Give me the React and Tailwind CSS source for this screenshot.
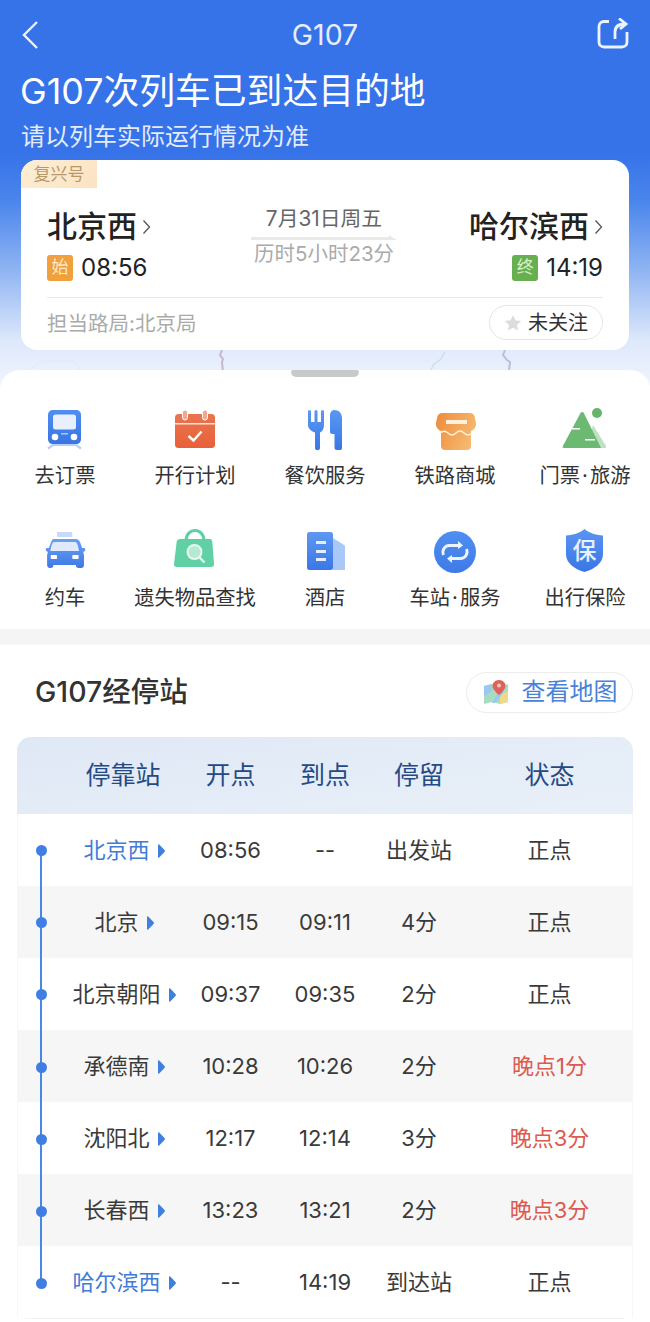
import React from "react";

const Grad = ({ id, from, to, x2 = 0, y2 = 1 }) => (
  <defs>
    <linearGradient id={id} x1="0" y1="0" x2={x2} y2={y2}>
      <stop offset="0" stopColor={from} />
      <stop offset="1" stopColor={to} />
    </linearGradient>
  </defs>
);

const Svg = ({ children }) => (
  <svg width="48" height="48" viewBox="0 0 48 48" fill="none">
    {children}
  </svg>
);

const TrainIcon = () => (
  <Svg>
    <Grad id="train" from="#4f8ff0" to="#3a74e4" />
    <path d="M12 4h23c3 0 5 2 5 5v24c0 3-2 5-5 5H12c-3 0-5-2-5-5V9c0-3 2-5 5-5z" fill="url(#train)" />
    <rect x="12" y="8.5" width="23" height="15" rx="2.5" fill="#e9f0fd" />
    <circle cx="14" cy="31" r="3.3" fill="#fff" />
    <circle cx="33" cy="31" r="3.3" fill="#fff" />
    <rect x="20" y="27" width="7" height="1.5" fill="#a9c6f7" />
    <path d="M7 42.5l5-3.500h23l5 3.500" stroke="#b4cff8" strokeWidth="2.2" />
  </Svg>
);

const CalendarIcon = () => (
  <Svg>
    <Grad id="cal" from="#e8764f" to="#e8603a" />
    <rect x="4" y="8" width="40" height="34" rx="3.5" fill="url(#cal)" />
    <rect x="4" y="17" width="40" height="1.5" fill="#fbe3da" />
    <rect x="11.5" y="4" width="5" height="10" rx="2.5" fill="#f3a68d" stroke="#fff" strokeWidth="1" />
    <rect x="31.5" y="4" width="5" height="10" rx="2.5" fill="#f3a68d" stroke="#fff" strokeWidth="1" />
    <path d="M17.5 30l5 4.500 8-9" stroke="#fff" strokeWidth="2.4" />
  </Svg>
);

const DiningIcon = () => (
  <Svg>
    <Grad id="din" from="#5a98f2" to="#3a76e6" />
    <path
      d="M7 5c0-1 3-1 3 0v11h3.500V5c0-1 3-1 3 0v11H20V5c0-1 3-1 3 0v14c0 4-2 6.500-4 7.500V42c0 3-5 3-5 0V26.500C11 25.500 7 23 7 19z"
      fill="url(#din)"
    />
    <path d="M33.500 4c5 0 7.500 4 7.500 8v30c0 1.500-1 2-2 2h-3c-1.500 0-2.500-1-2.500-2V28h-2c-1.500 0-2.500-1-2.500-2V9c0-3 2-5 4.500-5z" fill="url(#din)" />
  </Svg>
);

const StoreIcon = () => (
  <Svg>
    <Grad id="store" from="#ee8a3c" to="#f5b96e" x2={1} y2={0.4} />
    <path d="M11 7h28c2 0 3.500 1 4.500 3L45 17c.5 3-1.500 7-5 8v15c0 2.500-1.500 4-4 4H14c-2.500 0-4-1.500-4-4V25c-3.500-1-5.500-5-5-8l1.500-7C7.500 8 9 7 11 7z" fill="url(#store)" />
    <rect x="15" y="14" width="21" height="4" fill="#fdf0dd" />
    <path d="M9 27c3-2.500 5.500-2.500 8 0s5.500 2.500 8 0 5.500-2.500 8 0 5.500 2.500 8 0" stroke="#fdf0dd" strokeWidth="1.4" />
  </Svg>
);

const MountainIcon = () => (
  <Svg>
    <circle cx="36" cy="7" r="5" fill="#66b56c" />
    <path d="M32 19l13 21c.5 1 0 2-1 2H26z" fill="#bfe0c2" />
    <path d="M19.500 7c1-1.300 2.500-1.300 3.300 0L40 42H3c-1.300 0-1.800-1-1-2.200z" fill="#6cb972" />
    <rect x="11" y="22" width="8" height="1.5" fill="#fff" />
    <rect x="24" y="33" width="10" height="1.5" fill="#fff" />
  </Svg>
);

const CarIcon = () => (
  <Svg>
    <Grad id="car" from="#6ba0f3" to="#3e7ae6" />
    <g transform="translate(2.5 0) scale(0.9 1)">
      <rect x="15" y="4" width="17" height="5" rx="1" fill="#c7daf9" />
      <path d="M11 11h25c3 0 4 2 5 4l2 5h2c1.500 0 2 2 1 3l-2 1c.5 1 1 2 1 4v9c0 1.500-.8 3-3 3h-3c-2 0-3-1-3-3H11c0 2-1 3-3 3H7c-2 0-3-1.500-3-3V28c0-2 .5-3 1-4l-2-1c-1-1-.5-3 1-3h2l2-5c1-2 2-4 3-4z" fill="url(#car)" />
      <path d="M12 14h23c1.500 0 2 1 3 3l1.500 6h-32L9 17c1-2 1.500-3 3-3z" fill="#dfeafc" />
      <rect x="8" y="27" width="7" height="4" rx="0.8" fill="#fff" />
      <rect x="32" y="27" width="7" height="4" rx="0.8" fill="#fff" />
    </g>
  </Svg>
);

const BagIcon = () => (
  <Svg>
    <path d="M15 13c0-14 18-14 18 0" stroke="#5fd0a6" strokeWidth="3" />
    <path d="M9 11h30c1.500 0 2 1 2.300 2.500L43 36c.2 2-1 3-3 3H6c-2 0-3.200-1-3-3l2.700-22.500C6 12 7.500 11 9 11z" fill="#62d0a5" />
    <circle cx="23.5" cy="24" r="7" fill="#b6e9d4" stroke="#e7f8f1" strokeWidth="2" />
    <path d="M28.500 29.500l5 5" stroke="#e7f8f1" strokeWidth="2.4" />
  </Svg>
);

const HotelIcon = () => (
  <Svg>
    <Grad id="hotel" from="#5e98f1" to="#3b77e6" />
    <path d="M32 10l11 7c.5.3 1 .8 1 1.500V42H32z" fill="#a9c7f7" />
    <rect x="6" y="4" width="26" height="38" rx="2.5" fill="url(#hotel)" />
    <rect x="15" y="13" width="10" height="3" fill="#e4eefd" />
    <rect x="15" y="22" width="10" height="3" fill="#e4eefd" />
    <rect x="15" y="30" width="10" height="3" fill="#e4eefd" />
  </Svg>
);

const CycleIcon = () => (
  <Svg>
    <Grad id="cyc" from="#4f8ff0" to="#3f7ae6" />
    <circle cx="24" cy="24" r="21" fill="url(#cyc)" />
    <path d="M12.500 27c-2-5 1.500-9.500 6-9.500h11" stroke="#eef4fe" strokeWidth="2.8" />
    <path d="M27 13l5 4.500-5 3.500z" fill="#eef4fe" />
    <path d="M35.500 21c2 5-1.500 9.500-6 9.500h-11" stroke="#eef4fe" strokeWidth="2.8" />
    <path d="M21 35l-5-4.500 5-3.500z" fill="#eef4fe" />
  </Svg>
);

const ShieldIcon = () => (
  <Svg>
    <Grad id="shield" from="#5a95f1" to="#3a76e6" />
    <path d="M23.500 1c4 3.500 11 6 18.500 6.500V26c0 9-8 15-18.500 18C13 41 5 35 5 26V7.500C12.500 7 19.500 4.500 23.500 1z" fill="url(#shield)" />
    <text x="23.5" y="31" textAnchor="middle" fontSize="24" fontWeight="500" fill="#e9f1fe">
      保
    </text>
  </Svg>
);

const MapIcon = () => (
  <svg width="28" height="26" viewBox="0 0 28 26" fill="none">
    <path d="M2 7l8-2 8 2 8-2v18l-8 2-8-2-8 2z" fill="#a8dcc0" />
    <path d="M2 7l8-2v7l-8 5z" fill="#9cc7ee" />
    <path d="M18 16l8-4v11l-8 2z" fill="#f1d98a" />
    <path d="M10 24l8-14 4 3-9 11z" fill="#9cc7ee" />
    <path d="M17 1c-4 0-6.500 3-6.500 6C10.500 11 17 16 17 16s6.500-5 6.500-9c0-3-2.500-6-6.500-6z" fill="#e0605a" />
    <circle cx="17" cy="6.500" r="2" fill="#f7c5c1" />
  </svg>
);

const menus = [
  { icon: TrainIcon, label: "去订票" },
  { icon: CalendarIcon, label: "开行计划" },
  { icon: DiningIcon, label: "餐饮服务" },
  { icon: StoreIcon, label: "铁路商城" },
  { icon: MountainIcon, label: "门票", extra: "旅游" },
  { icon: CarIcon, label: "约车" },
  { icon: BagIcon, label: "遗失物品查找" },
  { icon: HotelIcon, label: "酒店" },
  { icon: CycleIcon, label: "车站", extra: "服务" },
  { icon: ShieldIcon, label: "出行保险" },
];

const stops = [
  { name: "北京西", dep: "08:56", arr: "--", stay: "出发站", status: "正点", active: true },
  { name: "北京", dep: "09:15", arr: "09:11", stay: "4分", status: "正点" },
  { name: "北京朝阳", dep: "09:37", arr: "09:35", stay: "2分", status: "正点" },
  { name: "承德南", dep: "10:28", arr: "10:26", stay: "2分", status: "晚点1分", late: true },
  { name: "沈阳北", dep: "12:17", arr: "12:14", stay: "3分", status: "晚点3分", late: true },
  { name: "长春西", dep: "13:23", arr: "13:21", stay: "2分", status: "晚点3分", late: true },
  { name: "哈尔滨西", dep: "--", arr: "14:19", stay: "到达站", status: "正点", active: true },
];

const Chevron = () => (
  <svg width="9" height="16" viewBox="0 0 9 16" fill="none" className="ml-[5px] mt-[1px]">
    <path d="M1.500 1.500L7.500 8l-6 6.500" stroke="#555" strokeWidth="1.3" />
  </svg>
);

const App = () => {
  return (
    <div className="relative h-[1322px] w-[650px] overflow-hidden bg-white font-['Inter','Noto_Sans_CJK_SC',sans-serif]">
      {/* Blue header */}
      <div className="relative h-[390px] bg-[linear-gradient(180deg,#3672e8_0px,#3672e8_150px,#4a85ec_200px,#8fb4f2_270px,#dde8fb_340px,#f2f6fe_390px)] px-[21px]">
        <div className="flex h-[70px] items-center justify-between">
          <div className="w-[32px]">
            <svg width="20" height="30" viewBox="0 0 20 30" fill="none">
              <path d="M16 2L3 15l13 13" stroke="#eef4fe" strokeWidth="2.4" />
            </svg>
          </div>
          <span className="text-[28.5px] leading-none text-[#e6eefc]">G107</span>
          <svg width="32" height="32" viewBox="0 0 32 32" fill="none" className="mt-[-2px]">
            <path d="M12 3.500H7c-3 0-5 2-5 5V24c0 3 2 5 5 5h18c3 0 5-2 5-5V14" stroke="#eef4fe" strokeWidth="2.8" />
            <path d="M18 21v-7c0-5 3-8 10-8" stroke="#eef4fe" strokeWidth="2.8" />
            <path d="M22 .5L29 6l-6 5" stroke="#eef4fe" strokeWidth="2.8" />
          </svg>
        </div>
        <h1 className="ml-[-1px] text-[35.8px] leading-[42px] text-white">G107次列车已到达目的地</h1>
        <p className="mt-[10px] text-[24px] leading-[30px] text-[#e4ecfc]">请以列车实际运行情况为准</p>

        <div className="relative z-10 mt-[8px] h-[190px] w-[608px] overflow-hidden rounded-[16px] bg-white px-[26px]">
          <div className="absolute left-0 top-0 flex h-[28px] w-[76px] items-center justify-center bg-[linear-gradient(135deg,#fdeed6,#fbe3c2)] pt-[1px] text-[17px] text-[#b8986a]">
            复兴号
          </div>
          <div className="flex h-[137px] justify-between pt-[47px]">
            <div>
              <div className="flex h-[38px] items-center">
                <span className="text-[30px] font-medium leading-none text-[#222]">北京西</span>
                <Chevron />
              </div>
              <div className="mt-[10px] flex items-center gap-[8px]">
                <span className="flex h-[26px] w-[26px] items-center justify-center rounded-[3px] bg-[#f0a03c] text-[17px] text-[#fde9cc]">始</span>
                <span className="text-[24px] leading-none text-[#222]">08:56</span>
              </div>
            </div>
            <div className="ml-[28px] flex w-[146px] flex-col items-center">
              <span className="mt-[-2px] text-[20.8px] leading-[28px] text-[#666]">7月31日周五</span>
              <svg width="146" height="8" viewBox="0 0 146 8" fill="none" className="mt-[1px]">
                <path d="M0 3h138V1l8 5H0z" fill="#e9e9e9" />
              </svg>
              <span className="mt-[-2px] text-[20.5px] leading-[28px] text-[#aaa]">历时5小时23分</span>
            </div>
            <div className="flex flex-col items-end">
              <div className="flex h-[38px] items-center">
                <span className="text-[30px] font-medium leading-none text-[#222]">哈尔滨西</span>
                <Chevron />
              </div>
              <div className="mt-[10px] flex items-center gap-[8px]">
                <span className="flex h-[26px] w-[26px] items-center justify-center rounded-[3px] bg-[#68b04f] text-[17px] text-[#d8f0cc]">终</span>
                <span className="text-[24px] leading-none text-[#222]">14:19</span>
              </div>
            </div>
          </div>
          <div className="flex h-[53px] items-center justify-between border-t border-[#e8e8e8] pb-[3px]">
            <span className="pt-[3px] text-[20.5px] text-[#aaa]">担当路局:北京局</span>
            <span className="flex h-[35px] w-[114px] items-center justify-center gap-[6px] rounded-full border border-[#e5e5e5] pt-[1px] text-[20px] text-[#333]">
              <svg width="18" height="18" viewBox="0 0 24 24" fill="#dcdcdc">
                <path d="M12 1.500l3.300 6.900 7.500 1-5.500 5.200 1.400 7.500L12 18.400l-6.700 3.700 1.400-7.500L1.200 9.400l7.500-1z" />
              </svg>
              未关注
            </span>
          </div>
        </div>

        {/* faint map strokes behind the card */}
        <svg width="650" height="22" viewBox="0 0 650 22" fill="none" className="absolute left-0 top-[350px]">
          <path d="M222 0l-2 5 3 4-1 3 1 10" stroke="#c4b9cc" strokeWidth="2" />
          <path d="M505 0l-2 5 4 5 3 2-1 9" stroke="#b9bfd9" strokeWidth="2" />
          <path d="M445 2l-5 8-6 4-3 6" stroke="#cfdcf2" strokeWidth="1.5" />
          <path d="M30 22c3-10 18-13 30-10 8-5 16 0 20 8" stroke="#e4ebf8" strokeWidth="1.5" />
        </svg>
      </div>

      {/* Services sheet */}
      <div className="relative mt-[-20px] rounded-t-[20px] bg-white pb-[17px] pt-[36px]">
        <div className="absolute left-[291px] top-0 h-[7px] w-[68px] rounded-b-[5px] rounded-t-[2px] bg-[#c9c9cb]" />
        <div className="grid grid-cols-5 gap-y-[38px]">
          {menus.map(({ icon: Icon, label, extra }) => (
            <div key={label} className="flex flex-col items-center">
              <Icon />
              <span className="mt-[8px] whitespace-nowrap text-[20.3px] leading-[28px] text-[#333]">
                {label}
                {extra && <span className="mx-[2px]">·</span>}
                {extra}
              </span>
            </div>
          ))}
        </div>
      </div>
      <div className="h-[16px] bg-[#f5f5f6]" />

      {/* Stops */}
      <div className="bg-white px-[17px]">
        <div className="flex h-[92px] items-center justify-between pl-[18px] pt-[2px]">
          <h2 className="text-[28.5px] font-medium text-[#333]">G107经停站</h2>
          <button className="flex h-[41px] w-[167px] items-center justify-center gap-[12px] rounded-full border border-[#ececec] text-[24px] text-[#4a82d8]">
            <MapIcon />
            查看地图
          </button>
        </div>

        <div className="relative">
          <div className="grid h-[77px] grid-cols-[46px_120px_95px_94px_94px_167px] items-center rounded-t-[14px] bg-[linear-gradient(170deg,#dfe8f5,#e9f0f9)] pt-[1px] text-center text-[25px] text-[#244a86]">
            <span />
            <span>停靠站</span>
            <span>开点</span>
            <span>到点</span>
            <span>停留</span>
            <span>状态</span>
          </div>

          {stops.map((stop, i) => (
            <div
              key={stop.name}
              className={`grid h-[72px] grid-cols-[46px_120px_95px_94px_94px_167px] items-center pt-[1px] text-center text-[22px] text-[#3a3a3a] ${i % 2 ? "bg-[#f6f6f6]" : "bg-white shadow-[inset_1px_0_#f7f7f7,inset_-1px_0_#f7f7f7]"}`}
            >
              <span />
              <span className={`flex items-center justify-center gap-[7px] whitespace-nowrap pl-[2px] ${stop.active ? "text-[#3f7bd8]" : "text-[#3a3a3a]"}`}>
                {stop.name}
                <svg width="8" height="14" viewBox="0 0 8 14" fill="#3f7fe0">
                  <path d="M1 1c0-.8.7-1 1.200-.5L7.500 6c.5.5.5 1.500 0 2l-5.300 5.500c-.5.5-1.200.3-1.200-.5z" />
                </svg>
              </span>
              <span>{stop.dep}</span>
              <span>{stop.arr}</span>
              <span>{stop.stay}</span>
              <span className={stop.late ? "text-[#dc5a4e]" : ""}>{stop.status}</span>
            </div>
          ))}
          <div className="mx-[8px] h-px bg-[#f2f2f2]" />

          {/* timeline over the rows */}
          <div className="absolute left-[23px] top-[113px] h-[433px] w-[2px] bg-[#4a86e6]" />
          {stops.map((stop, i) => (
            <span
              key={stop.name}
              className="absolute left-[18.5px] h-[11px] w-[11px] rounded-full bg-[#3f7fe4]"
              style={{ top: 108 + i * 72.17 }}
            />
          ))}
        </div>
      </div>
    </div>
  );
};

export default App;
